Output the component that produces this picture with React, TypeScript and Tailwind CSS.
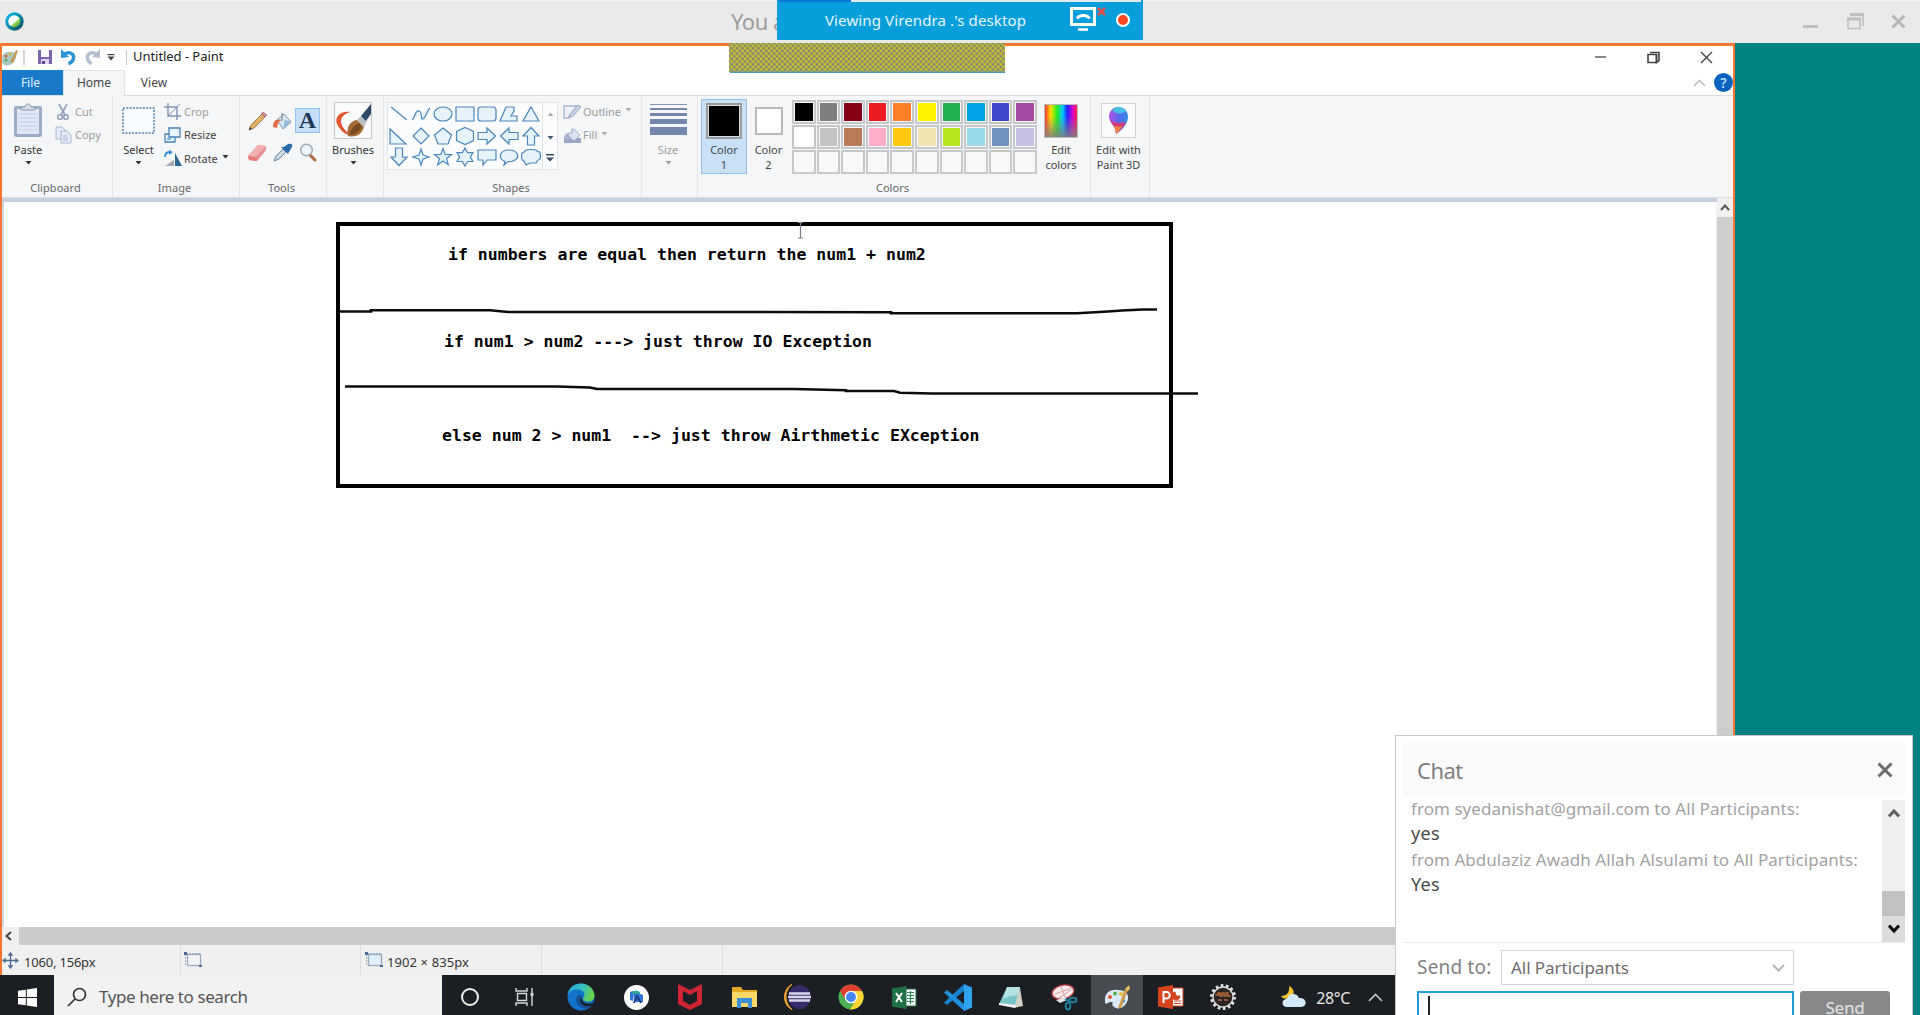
import React from "react";
import type { ReactNode } from "react";

/* ---------- small shared pieces ---------- */

function Caret({ className = "text-[#222]" }: { className?: string }) {
  return (
    <svg width="7" height="4" viewBox="0 0 7 4" className={className}>
      <path d="M0.5 0h6L3.5 3.6z" fill="currentColor" />
    </svg>
  );
}

function Group({ width, label, children }: { width: string; label?: string; children: ReactNode }) {
  return (
    <div className={`${width} flex h-[101px] shrink-0 flex-col border-r border-[#e2e3e4] bg-[#f5f6f7]`}>
      <div className="flex h-[83px] items-start">{children}</div>
      <div className="h-[18px] pr-[3px] text-center leading-[17px] tracking-[0.05px] text-[#686868]">{label}</div>
    </div>
  );
}

function BigButton({
  width,
  icon,
  lines,
  caret,
  className = "text-[#444]",
}: {
  width: string;
  icon: ReactNode;
  lines: string[];
  caret?: boolean;
  className?: string;
}) {
  return (
    <div className={`${width} ${className} flex shrink-0 flex-col items-center pt-[6px]`}>
      <div className="flex h-[37px] items-center justify-center">{icon}</div>
      <div className="mt-[3px] text-center">
        {lines.map((l) => (
          <div key={l} className="h-[15px] whitespace-nowrap leading-[15px]">
            {l}
          </div>
        ))}
      </div>
      {caret && <Caret className="mt-[4px]" />}
    </div>
  );
}

function SmallRow({ icon, label, caret, muted }: { icon: ReactNode; label: string; caret?: boolean; muted?: boolean }) {
  return (
    <div className={`flex h-[23.5px] items-center ${muted ? "text-[#9b9b9b]" : "text-[#444]"}`}>
      <div className="flex w-[20px] items-center">{icon}</div>
      <span className="leading-[16px]">{label}</span>
      {caret && <Caret className={`mb-[3px] ml-[4px] ${muted ? "text-[#a9a9a9]" : "text-[#333]"}`} />}
    </div>
  );
}

/* ---------- ribbon icons ---------- */

const PasteIcon = () => (
  <svg width="30" height="35" viewBox="0 0 30 35">
    <rect x="1" y="3" width="28" height="31" rx="2" fill="#9cadca" />
    <rect x="4" y="6" width="22" height="25" fill="#dfe7f5" />
    <path d="M5 11h20M5 15h20M5 19h20M5 23h20M5 27h20" stroke="#c3cfe6" />
    <path d="M8 7V4h4c0-4 6-4 6 0h4v3z" fill="#d8dee9" stroke="#8796b3" />
  </svg>
);
const CutIcon = () => (
  <svg width="16" height="18" viewBox="0 0 16 18" fill="none" stroke="#94a1ba" strokeWidth="1.6">
    <path d="M4 1l6 11M12 1L6 12" />
    <circle cx="5" cy="14" r="2.3" />
    <circle cx="11" cy="14" r="2.3" />
  </svg>
);
const CopyIcon = () => (
  <svg width="17" height="18" viewBox="0 0 17 18" fill="#e6ebf6" stroke="#a9b7d3">
    <path d="M1 1h6l3 3v9H1z" />
    <path d="M6 5h6l4 4v8H6z" />
    <path d="M8 10h4M8 12h5M8 14h5" />
  </svg>
);
const CropIcon = () => (
  <svg width="17" height="17" viewBox="0 0 17 17" fill="none" stroke="#8195b5" strokeWidth="1.4">
    <path d="M0 4h13v13M4 0v13h13" />
    <path d="M4 13L16 1" strokeWidth="1" />
  </svg>
);
const ResizeIcon = () => (
  <svg width="17" height="16" viewBox="0 0 17 16" fill="#eaf4fc" stroke="#4683b5" strokeWidth="1.3">
    <path d="M1 7h10v8H1z" />
    <path d="M5 1h11v9H5z" />
    <path d="M3 12h4" stroke="#2e9bdc" />
  </svg>
);
const RotateIcon = () => (
  <svg width="19" height="17" viewBox="0 0 19 17">
    <path d="M10 16H1l9-6z" fill="#a3acb5" />
    <path d="M11 16V3l7 13z" fill="#2e6792" />
    <path d="M1 7c0-4 2-5 5-5" fill="none" stroke="#2f8fe0" strokeWidth="1.8" />
    <path d="M5 0l4 2-4 3z" fill="#2f8fe0" />
  </svg>
);
const PencilIcon = () => (
  <svg width="20" height="20" viewBox="0 0 20 20">
    <path d="M1 19l2-5L14 3l3 3L6 17z" fill="#e2b264" stroke="#8a6a3c" strokeWidth=".8" />
    <path d="M13 3l2-2 4 3-2 2z" fill="#d48a84" stroke="#8d6666" strokeWidth=".6" />
    <path d="M1 19l1-3 2 2z" fill="#333" />
  </svg>
);
const BucketIcon = () => (
  <svg width="21" height="20" viewBox="0 0 21 20">
    <path d="M5 9l7-6 7 8-8 7z" fill="#dbe8f3" stroke="#7391ac" />
    <path d="M10 10V2" stroke="#6c7e90" fill="none" />
    <path d="M1 16c0-6 3-9 9-7-4 1-4 4-5 8z" fill="#dd6b43" />
    <path d="M13 9l6 2-8 7z" fill="#8fbade" />
  </svg>
);
const EraserIcon = () => (
  <svg width="21" height="18" viewBox="0 0 21 18">
    <path d="M1 12L11 1l8 1v4L10 17l-8-1z" fill="#e58d90" />
    <path d="M1 12L11 1l8 1-10 11z" fill="#f3b0b0" />
    <path d="M1 12l8 1 1 4-8-1z" fill="#e8797c" />
  </svg>
);
const PickerIcon = () => (
  <svg width="20" height="19" viewBox="0 0 20 19">
    <path d="M1 18l2-5 7-7 3 3-7 7z" fill="#c8d6e2" stroke="#6e8aa3" />
    <path d="M8 4l7 7 1-2 3-5c1-3-1-4-4-3l-4 3z" fill="#2a6cab" />
  </svg>
);
const MagnifierIcon = () => (
  <svg width="18" height="19" viewBox="0 0 18 19">
    <path d="M11 12l5 5" stroke="#b0683c" strokeWidth="3" strokeLinecap="round" />
    <circle cx="7.5" cy="7" r="5.8" fill="#eef5fb" stroke="#9ba7b3" strokeWidth="1.4" />
  </svg>
);
const BrushIcon = () => (
  <svg width="38" height="37" viewBox="0 0 38 37">
    <rect x=".5" y=".5" width="37" height="36" fill="#fbfbfc" stroke="#c4c6c9" />
    <path d="M17 10C7 8 0 15 3 22c3 6 8 11 15 12-6-5-11-9-11-15 0-4 4-8 10-9z" fill="#e2562f" />
    <path d="M14 34c-2-9 2-15 9-16l7 7c-2 7-8 11-16 9z" fill="#a56a33" />
    <path d="M16 33c0-5 4-10 9-12l3 3c-2 5-6 8-12 9z" fill="#7a4a22" />
    <path d="M23 18l4-4 6 5-3 6z" fill="#b9bec4" />
    <path d="M27 14L37 2v10l-5 7z" fill="#2c4a68" />
  </svg>
);

function Shape({ d }: { d: string }) {
  return (
    <svg width="22" height="22" viewBox="0 0 22 22" fill="#e6f3fb" stroke="#4a86b8" strokeWidth="1.2">
      <path d={d} />
    </svg>
  );
}
const SHAPES = [
  "M3 4l16 13",
  "M2 17c3-2 3-10 7-9s1 9 4 8 3-7 7-11",
  "M2 11a9 7 0 0 1 18 0a9 7 0 0 1-18 0z",
  "M2 4h18v14H2z",
  "M5 4h12q3 0 3 3v8q0 3-3 3H5q-3 0-3-3V7q0-3 3-3z",
  "M2 18h17v-5h-6l3-5V4H8z",
  "M11 4l8 14H3z",
  "M2 4v15h16z",
  "M11 3l8 8-8 8-8-8z",
  "M11 3l8.5 7-3.5 9H6L2.500 10z",
  "M11 2.500l8.500 4v9l-8.500 4-8.500-4v-9z",
  "M2 7.500h9V3l8.500 8-8.500 8v-4.500H2z",
  "M20 7.500h-9V3l-8.500 8 8.500 8v-4.500h9z",
  "M7.500 20v-9H3l8-8.500 8 8.500h-4.500v9z",
  "M7.500 2v9H3l8 8.500 8-8.500h-4.500V2z",
  "M11 3l2 6 6 2-6 2-2 6-2-6-6-2 6-2z",
  "M11 2.500l2.200 5.900 6.300.2-5 3.900 1.800 6.200-5.300-3.600-5.300 3.600 1.800-6.200-5-3.900 6.300-.2z",
  "M11 2l2.600 4.600H19L16.400 11l2.600 4.500h-5.400L11 20l-2.600-4.500H3L5.600 11 3 6.600h5.400z",
  "M2 4h18v10h-9l-4 5v-5H2z",
  "M7 15.500C-1 12 2 4 11 4s12 8 4 11c-2 .8-4 .8-5 .6L6 19z",
  "M6 4q5-1 10 0 1 2 4 2 1 4 0 7-3 1-4 4h-6l-4 2-1-2q-1-3-3-3-1-4 0-7 3-1 4-3z",
];

const OutlineIcon = () => (
  <svg width="19" height="16" viewBox="0 0 19 16">
    <path d="M1 2h13l-9 12H1z" fill="#eef1f8" stroke="#a8b4d0" strokeWidth="1.3" />
    <path d="M6 14l1-4 8-9 3 2-8 9z" fill="#c9d2e6" stroke="#98a7c6" />
  </svg>
);
const FillIcon = () => (
  <svg width="19" height="17" viewBox="0 0 19 17">
    <path d="M1 11h17v5H1z" fill="#98a6c8" />
    <path d="M1 12c0-5 3-7 8-6l-3 7z" fill="#a9b5d3" />
    <path d="M5 8l6-6 6 6-6 6z" fill="#dce2ef" stroke="#a8b4d0" />
    <path d="M9 7V1" stroke="#a8b4d0" />
  </svg>
);

const PALETTE = [
  "#000000", "#7f7f7f", "#880015", "#ed1c24", "#ff7f27", "#fff200", "#22b14c", "#00a2e8", "#3f48cc", "#a349a4",
  "#ffffff", "#c3c3c3", "#b97a57", "#ffaec9", "#ffc90e", "#efe4b0", "#b5e61d", "#99d9ea", "#7092be", "#c8bfe7",
  "", "", "", "", "", "", "", "", "", "",
];

/* ---------- paint window ---------- */

function TitleRow() {
  return (
    <div className="flex h-[24px] items-center bg-white pb-[2px]">
      <svg width="17" height="17" viewBox="0 0 17 17" className="shrink-0">
        <path d="M0 7c2-5 9-5 13-3 3 2 0 9-3 11s-7 2-9 0 0-4-1-8z" fill="#a8c8c6" />
        <circle cx="4" cy="7" r="1.500" fill="#d9603c" />
        <circle cx="8" cy="5" r="1.500" fill="#e0b83a" />
        <circle cx="4" cy="11" r="1.500" fill="#5aa457" />
        <path d="M8 13l6-12 2 1-5 12z" fill="#c89a5c" />
      </svg>
      <div className="ml-[4px] h-[15px] w-[2px] bg-[#d4d4d4]" />
      <svg width="16" height="16" viewBox="0 0 16 16" className="ml-[12px]">
        <path d="M1 1h14v14H1z" fill="#7d64ae" />
        <path d="M4 1h8v7H4z" fill="#fff" />
        <path d="M4 10h8v5H4z" fill="#dcd4ee" />
        <path d="M5 12h3v3H5z" fill="#60488f" />
      </svg>
      <svg width="17" height="17" viewBox="0 0 17 17" className="ml-[7px]" fill="none">
        <path d="M4 5.500c5-3.500 10.500-1 9.500 4-.4 3-2 4-5 5.500" stroke="#2a94d6" strokeWidth="3.400" />
        <path d="M1 0v9l8-1z" fill="#2a94d6" />
      </svg>
      <svg width="17" height="17" viewBox="0 0 17 17" className="ml-[7px]" fill="none">
        <path d="M13 5.500C8 2 2.500 4.500 3.500 9.500c.4 3 2 4 4 5.500" stroke="#b4bfd2" strokeWidth="3.400" />
        <path d="M16 0v9l-8-1z" fill="#b4bfd2" />
      </svg>
      <svg width="8" height="7" viewBox="0 0 8 7" className="ml-[6px] text-[#444]">
        <path d="M.5 0h7v1.200h-7zM.5 2.600h7L4 6.500z" fill="currentColor" />
      </svg>
      <div className="ml-[11px] h-[15px] w-[1px] bg-[#c9c9c9]" />
      <span className="ml-[6px] text-[13px] tracking-[-0.05px] text-[#222]">Untitled - Paint</span>
      <div className="ml-auto mr-[20px] flex items-center text-[#444]">
        <div className="mr-[41px] h-[2px] w-[11px] bg-[#888]" />
        <svg width="13" height="13" viewBox="0 0 13 13" className="mr-[40px]" fill="none" stroke="currentColor" strokeWidth="1.600">
          <path d="M1 3.500h8.500v8H1z" />
          <path d="M3 1.500h9v8L9.500 11.500V3.500" />
        </svg>
        <svg width="13" height="13" viewBox="0 0 13 13" stroke="currentColor" strokeWidth="1.400">
          <path d="M1 1l11 11M12 1L1 12" />
        </svg>
      </div>
    </div>
  );
}

function TabRow() {
  return (
    <div className="flex h-[25px] items-stretch bg-white text-[12px] leading-[25px] text-[#444]">
      <div className="w-[61px] bg-[#1979ca] pr-[4px] text-center text-[#e9f3fb]">File</div>
      <div className="z-10 -mb-px w-[62px] border-x border-t border-[#e2e3e4] bg-[#f5f6f7] text-center leading-[24px]">Home</div>
      <div className="w-[58px] text-center">View</div>
      <div className="ml-auto flex items-center">
        <svg width="13" height="8" viewBox="0 0 13 8" className="mr-[8px]" fill="none" stroke="#bdbdbd" strokeWidth="1.600">
          <path d="M1 7l5.500-5.500L12 7" />
        </svg>
        <div className="size-[19px] rounded-full bg-[#0a62bd] text-center text-[14px] font-semibold leading-[19px] text-[#b9dcff]">?</div>
      </div>
    </div>
  );
}

function Ribbon() {
  return (
    <div className="flex h-[103px] border-y border-[#dcddde] bg-[#f5f6f7] text-[11px]">
      <Group width="w-[111px]" label="Clipboard">
        <BigButton width="w-[52px]" icon={<PasteIcon />} lines={["Paste"]} caret className="text-[#333]" />
        <div className="ml-px pt-[4px]">
          <SmallRow icon={<CutIcon />} label="Cut" muted />
          <SmallRow icon={<CopyIcon />} label="Copy" muted />
        </div>
      </Group>
      <Group width="w-[127px]" label="Image">
        <BigButton
          width="w-[51px]"
          lines={["Select"]}
          caret
          className="text-[#333]"
          icon={
            <svg width="33" height="27" viewBox="0 0 33 27">
              <rect x="1" y="1" width="31" height="25" fill="#f8fbfd" stroke="#4f82ae" strokeWidth="1.500" strokeDasharray="2 1.300" />
            </svg>
          }
        />
        <div className="pt-[4px]">
          <SmallRow icon={<CropIcon />} label="Crop" muted />
          <SmallRow icon={<ResizeIcon />} label="Resize" />
          <SmallRow icon={<RotateIcon />} label="Rotate" caret />
        </div>
      </Group>
      <Group width="w-[87px]" label="Tools">
        <div className="ml-[5px] grid grid-cols-[25px_25px_25px] grid-rows-[29px_35px] place-items-center pt-[10px]">
          <PencilIcon />
          <BucketIcon />
          <div className="size-[25px] border border-[#8fc0ee] bg-[#c7dff6] text-center font-['Liberation_Serif'] text-[24px] font-bold leading-[23px] text-[#1e3857]">
            A
          </div>
          <EraserIcon />
          <PickerIcon />
          <MagnifierIcon />
        </div>
      </Group>
      <Group width="w-[57px]">
        <BigButton width="w-[52px]" icon={<BrushIcon />} lines={["Brushes"]} caret className="text-[#333]" />
      </Group>
      <Group width="w-[258px]" label="Shapes">
        <div className="ml-[3px] mt-[6px] flex h-[68px] w-[171px] border border-[#dfe1e3] bg-[#fbfcfd]">
          <div className="grid h-[66px] w-[154px] grid-cols-7 grid-rows-[21.5px_21.5px_21.5px]">
            {SHAPES.map((d) => (
              <Shape key={d} d={d} />
            ))}
          </div>
          <div className="flex flex-1 flex-col items-center justify-between border-l border-[#dfe1e3] py-[9px]">
            <Caret className="rotate-180 text-[#a5a8ac]" />
            <Caret className="mt-[5px] text-[#3c5672]" />
            <svg width="8" height="8" viewBox="0 0 8 8" className="-mb-[2px] text-[#3c4c62]">
              <path d="M0 0h8v1.500H0zM0 3.500h8L4 7.500z" fill="currentColor" />
            </svg>
          </div>
        </div>
        <div className="ml-[5px] pt-[4px] text-[#9b9b9b]">
          <SmallRow icon={<OutlineIcon />} label="Outline" caret muted />
          <SmallRow icon={<FillIcon />} label="Fill" caret muted />
        </div>
      </Group>
      <Group width="w-[56px]">
        <BigButton
          width="w-[52px]"
          lines={["Size"]}
          caret
          className="text-[#9b9b9b]"
          icon={
            <div className="flex w-[37px] flex-col gap-[3px] pb-[2px]">
              <div className="h-px bg-[#8496b8]" />
              <div className="h-[2px] bg-[#7387ad]" />
              <div className="h-[3px] bg-[#7387ad]" />
              <div className="h-[5px] bg-[#7387ad]" />
              <div className="h-[8px] bg-[#7387ad]" />
            </div>
          }
        />
      </Group>
      <Group width="w-[393px]" label="Colors">
        <div className="ml-[3px] mt-[3px] h-[75px] w-[46px] border border-[#8fc0ee] bg-[#c9e0f7] text-[#444]">
          <BigButton
            width="w-[44px] -mt-[4px]"
            lines={["Color", "1"]}
            icon={
              <div className="size-[36px] border-2 border-[#9a9a9a] bg-[#d5dce4] p-px">
                <div className="size-full bg-black" />
              </div>
            }
          />
        </div>
        <BigButton
          width="w-[43px]"
          lines={["Color", "2"]}
          icon={<div className="size-[28px] border-2 border-[#b9b9b9] bg-white" />}
        />
        <div className="ml-[2px] mt-[4px] grid w-[246px] grid-cols-10 gap-y-[1px]">
          {PALETTE.map((c, i) => (
            <div key={i} className="h-[24px] w-[23.500px] border-2 border-[#c6c7c9] bg-[#f7f8f9] p-px">
              {c && <div className="size-full" style={{ backgroundColor: c }} />}
            </div>
          ))}
        </div>
        <BigButton
          width="w-[46px]"
          lines={["Edit", "colors"]}
          icon={
            <div className="size-[34px] border border-[#bbb] bg-[linear-gradient(90deg,#f33,#fd0_18%,#2e2_38%,#0cf_55%,#22f_70%,#d0c_87%,#f24)]">
              <div className="size-full bg-[linear-gradient(transparent_35%,#808080e0)]" />
            </div>
          }
        />
      </Group>
      <Group width="w-[59px]">
        <BigButton
          width="w-[55px]"
          lines={["Edit with", "Paint 3D"]}
          icon={
            <div className="flex size-[35px] items-center justify-center border border-[#cfd1d3] bg-[#fafbfb]">
              <svg width="21" height="29" viewBox="0 0 21 29">
                <defs>
                  <linearGradient id="p3a" x1="0" y1="0.4" x2="1" y2="0.5">
                    <stop offset="0" stopColor="#b453e6" />
                    <stop offset=".5" stopColor="#5a68ec" />
                    <stop offset="1" stopColor="#2f8fe8" />
                  </linearGradient>
                </defs>
                <path d="M10.500 1C4 1 1 6 1 11c0 6 7 8 7 17 5-3 12-10 12-17 0-6-4-10-9.500-10z" fill="url(#p3a)" />
                <path d="M4 4c4-4 10-4 14 1-3 3-10 4-14-1z" fill="#46c3e2" />
                <path d="M2 14c6 4 12 3 16 2-2 5-6 9-10 12 0-7-4-9-6-14z" fill="#d1397b" />
                <path d="M6 20c3 1 6 1 8 0-2 4-3 5-6 8 0-3-1-6-2-8z" fill="#f08a3c" />
              </svg>
            </div>
          }
        />
      </Group>
    </div>
  );
}

function Canvas() {
  return (
    <div className="relative h-[725px] w-[1714px] overflow-hidden border-l-2 border-[#ccd5e4] bg-white font-['DejaVu_Sans_Mono'] text-[16.500px] font-bold leading-[20px] tracking-[0.02px] text-black">
      <div className="absolute left-[332px] top-[20px] h-[266px] w-[837px] border-4 border-black" />
      <svg width="1712" height="725" viewBox="4 202 1712 725" className="absolute left-0 top-0" fill="none" stroke="#0c0c0c" strokeWidth="2.600">
        <path d="M340 311.500H371V310.300H490L508 312H760L891 312.300V313.200H1077L1108 311.500L1122 310.500L1143 309.500H1157" />
        <path d="M345 386.500H557L590 387.500L597 389H794L846 390.300V391H894L900 392.700L932 393.500H1198" />
        <path d="M798 222.500h2.500v15.500M800.500 222.500h2.500M798 238h5" stroke="#7c7f88" strokeWidth="1.200" />
      </svg>
      <div className="absolute left-[444px] top-[43px] whitespace-pre">if numbers are equal then return the num1 + num2</div>
      <div className="absolute left-[440px] top-[130px] whitespace-pre">{"if num1 > num2 ---> just throw IO Exception"}</div>
      <div className="absolute left-[438px] top-[224px] whitespace-pre">{"else num 2 > num1  --> just throw Airthmetic EXception"}</div>
    </div>
  );
}

const FrameIcon = ({ fill }: { fill: string }) => (
  <svg width="19" height="17" viewBox="0 0 19 17">
    <rect x="3.500" y="2.500" width="13" height="11" fill={fill} stroke="#9aa9bc" strokeWidth="1.300" />
    <path d="M1.500 2v12M2 1.500h14" stroke="#9db0c6" strokeDasharray="2 1" />
    <path d="M0 0h3v3H0zM15 13h3v2h-3z" fill="#4a6a94" />
  </svg>
);

function StatusBar() {
  return (
    <div className="flex h-[30px] items-stretch bg-[#f0f0f0] text-[13px] leading-[30px] text-[#333]">
      <div className="flex w-[179px] items-center border-r border-[#dcdcdc]">
        <svg width="17" height="17" viewBox="0 0 17 17" stroke="#4b6a92" strokeWidth="1.300" fill="#4b6a92">
          <path d="M8.500 2v13M2 8.500h13" />
          <path d="M7 3l1.500-2L10 3zM7 14l1.500 2 1.500-2zM3 7L1 8.500 3 10zM14 7l2 1.500-2 1.500z" />
        </svg>
        <span className="ml-[5px] pt-[3px] tracking-[-0.2px]">1060, 156px</span>
      </div>
      <div className="flex w-[180px] items-center border-r border-[#dcdcdc] pl-[3px]">
        <FrameIcon fill="#f4f4f6" />
      </div>
      <div className="flex w-[181px] items-center border-r border-[#dcdcdc] pl-[4px]">
        <FrameIcon fill="#dff0fa" />
        <span className="ml-[3px] pt-[3px] tracking-[0.1px]">1902 × 835px</span>
      </div>
      <div className="w-[181px] border-r border-[#dcdcdc]" />
    </div>
  );
}

function PaintWindow() {
  return (
    <div className="flex h-[932px] w-[1735px] flex-col border-l-2 border-r-2 border-t-[3px] border-[#fb7430] bg-[#f0f0f0]">
      <TitleRow />
      <TabRow />
      <Ribbon />
      <div className="flex h-[729px] shrink-0">
        <div className="flex w-[1715px] flex-col">
          <div className="h-[4px] shrink-0 bg-[#c3cedf]" />
          <Canvas />
        </div>
        <div className="flex flex-1 flex-col bg-[#cdcdcd]">
          <div className="flex h-[19px] items-center justify-center bg-[#f0f0f0]">
            <svg width="10" height="7" viewBox="0 0 10 7" fill="none" stroke="#555" strokeWidth="2">
              <path d="M1 6l4-4.500L9 6" />
            </svg>
          </div>
        </div>
      </div>
      <div className="flex h-[18px] bg-[#cbcbcb]">
        <div className="flex w-[17px] items-center bg-[#f0f0f0] pl-[3px]">
          <svg width="7" height="10" viewBox="0 0 7 10" fill="none" stroke="#444" strokeWidth="2">
            <path d="M6 1L1.500 5 6 9" />
          </svg>
        </div>
      </div>
      <StatusBar />
    </div>
  );
}

/* ---------- taskbar ---------- */

function TaskIcon({ children, active, wide }: { children: ReactNode; active?: boolean; wide: string }) {
  return (
    <div className={`${wide} flex h-full shrink-0 items-center justify-center pt-[4px] ${active ? "bg-[#474b50]" : ""}`}>
      {children}
    </div>
  );
}

function Taskbar() {
  return (
    <div className="flex h-[40px] w-[1395px] bg-[#1b1f23]">
      <div className="flex w-[54px] items-center justify-center pt-[4px]">
        <svg width="19" height="19" viewBox="0 0 19 19" fill="#fff">
          <path d="M0 2.800L7.800 1.700V9H0zM8.800 1.500L19 0v9H8.800zM0 10h7.800v7.300L0 16.200zM8.800 10H19v9L8.800 17.500z" />
        </svg>
      </div>
      <div className="flex w-[388px] items-center bg-[#f2f2f2] pt-[4px]">
        <svg width="20" height="20" viewBox="0 0 20 20" className="ml-[13px]" fill="none" stroke="#333" strokeWidth="1.700">
          <circle cx="12.500" cy="7.500" r="6" />
          <path d="M8 12l-7 7" />
        </svg>
        <span className="ml-[12px] text-[17px] leading-[22px] tracking-[-0.42px] text-[#555]">Type here to search</span>
      </div>
      <TaskIcon wide="w-[56px]">
        <div className="size-[18px] rounded-full border-[2.500px] border-[#eee]" />
      </TaskIcon>
      <TaskIcon wide="w-[53px]">
        <svg width="20" height="18" viewBox="0 0 20 18" fill="none" stroke="#d4d6d8" strokeWidth="1.400">
          <path d="M1 0v3h11V0M1 18v-3h11v3M2.500 5.500h9v7h-9zM17 0v18" />
          <path d="M15.500 5h3v3h-3z" fill="#d4d6d8" stroke="none" />
        </svg>
      </TaskIcon>
      <TaskIcon wide="w-[59px]">
        <svg width="28" height="28" viewBox="0 0 28 28">
          <defs>
            <linearGradient id="eg" x1="0" y1="0" x2="1" y2=".3">
              <stop offset="0" stopColor="#2aa5dd" />
              <stop offset=".6" stopColor="#35c0bd" />
              <stop offset="1" stopColor="#67d24d" />
            </linearGradient>
          </defs>
          <circle cx="14" cy="14" r="13.500" fill="#1273c8" />
          <path d="M.5 13C1 5 7 .5 14 .5S27.500 6 27.500 12.500c0 4-3 6-6.500 6s-5-1.500-5-3c0-1 1.500-2 1.500-4C17.500 8 13 6 9 6.500 4 7 1 10 .5 13z" fill="url(#eg)" />
          <path d="M9 16c0 6 5 10 11 9.500 2.500-.5 4.500-2 5.500-3.500-5 2-10 0-11-3-1-3 1-4 1-5-2-3-6.500-2-6.500 2z" fill="#14509a" />
          <path d="M14.500 14.500c-.500 4 4 7.500 11.500 5.500l-1 2.500c-6 2-12-1-12-6z" fill="#1b1f23" />
        </svg>
      </TaskIcon>
      <TaskIcon wide="w-[52px]">
        <div className="flex size-[25px] items-center justify-center rounded-full bg-white">
          <svg width="15" height="16" viewBox="0 0 15 16">
            <path d="M1 3l3-1v10l-3-1zM4 4h5l5 2v7H5z" fill="#2f73d9" />
            <path d="M3 3q4-3 8 0v2L4 5z" fill="#3aa39a" />
            <path d="M4 14L8 5l5 9h-2L8 9l-2 5z" fill="#173f80" />
          </svg>
        </div>
      </TaskIcon>
      <TaskIcon wide="w-[55px]">
        <svg width="26" height="26" viewBox="0 0 26 26" fill="#cf2433">
          <path d="M1 0l12 6L25 0v20l-12 6-12-6zM6 7v10l7 4 7-4V7l-7 4z" fillRule="evenodd" />
        </svg>
      </TaskIcon>
      <TaskIcon wide="w-[54px]">
        <svg width="25" height="22" viewBox="0 0 25 22">
          <path d="M0 1h9l2 3h14v17H0z" fill="#e5a822" />
          <path d="M0 6h25v15H0z" fill="#fbd767" />
          <path d="M5 22V12h15v10h-4v-5H9v5z" fill="#3c8ed6" />
        </svg>
      </TaskIcon>
      <TaskIcon wide="w-[53px]">
        <svg width="27" height="26" viewBox="0 0 27 26">
          <path d="M8 .5C-2 5-2 21 8 25.500-1 17 1 6 8 .5z" fill="#f0a530" stroke="#f0a530" />
          <ellipse cx="15.500" cy="13" rx="11.500" ry="12" fill="#382b6c" />
          <path d="M5 9.500h21M4 13h23M5 16.500h21" stroke="#d9d6ea" strokeWidth="2.300" />
        </svg>
      </TaskIcon>
      <TaskIcon wide="w-[53px]">
        <svg width="26" height="26" viewBox="0 0 26 26">
          <circle cx="13" cy="13" r="12.500" fill="#4caf50" />
          <path d="M2 7A12.500 12.500 0 0 1 24 7H13l-6 8z" fill="#e0402f" />
          <path d="M24 7A12.500 12.500 0 0 1 12 25.500L19 14l-1-4-5-3z" fill="#fdd633" />
          <circle cx="13" cy="13" r="6.300" fill="#fff" />
          <circle cx="13" cy="13" r="4.900" fill="#4285f4" />
        </svg>
      </TaskIcon>
      <TaskIcon wide="w-[54px]">
        <svg width="25" height="23" viewBox="0 0 25 23">
          <path d="M12 3h12v17H12z" fill="#fff" stroke="#1f7145" />
          <path d="M15 6.500h7M15 9.500h7M15 12.500h7M15 15.500h7M18.500 5v13" stroke="#2c8254" strokeWidth="1.200" />
          <path d="M0 2.500L14.500 0v23L0 20.500z" fill="#1f7145" />
          <path d="M4 7l6 9M10 7l-6 9" stroke="#fff" strokeWidth="2" />
        </svg>
      </TaskIcon>
      <TaskIcon wide="w-[53px]">
        <svg width="28" height="27" viewBox="0 0 28 27">
          <path d="M20 0l8 3.500v20L20 27z" fill="#2ea3ef" />
          <path d="M20 0v7L3 21l-3-2.500z" fill="#1782cc" />
          <path d="M3 6L0 8.500 20 27v-7z" fill="#1e90dc" />
        </svg>
      </TaskIcon>
      <TaskIcon wide="w-[53px]">
        <svg width="26" height="25" viewBox="0 0 26 25">
          <path d="M10 3l12 0 3 18-9 2z" fill="#d3d2c6" />
          <path d="M9 2h13l-5 18-16-1z" fill="#79c6ca" />
          <path d="M9 2h13l-2 8-8 1-7 3z" fill="#b5e1e2" />
          <path d="M1 18l17 2-1 3L1 20z" fill="#f4f4f4" />
        </svg>
      </TaskIcon>
      <TaskIcon wide="w-[54px]">
        <svg width="27" height="27" viewBox="0 0 27 27">
          <ellipse cx="12" cy="8" rx="11" ry="6.800" fill="#f5e9ea" stroke="#c93b45" strokeWidth="1.300" transform="rotate(-12 12 8)" />
          <path d="M4 10l17-6M8 14l12-8M10 2l4 11" stroke="#d4a1a5" />
          <path d="M5 16l10-3 1 3-7 3z" fill="#e4e4e4" />
          <path d="M14 15l4 2" stroke="#1f7f9c" strokeWidth="2" />
          <ellipse cx="22" cy="16" rx="3.500" ry="2.300" fill="none" stroke="#1f7f9c" strokeWidth="2" />
          <ellipse cx="17" cy="22" rx="2.300" ry="3.500" fill="none" stroke="#1f7f9c" strokeWidth="2" />
        </svg>
      </TaskIcon>
      <TaskIcon active wide="w-[52px]">
        <svg width="26" height="26" viewBox="0 0 26 26">
          <path d="M1 18C0 9 6 5 14 6c9 0 12 6 9 12s-9 8-13 5 1-5-3-5-5 4-6 0z" fill="#d9e9f5" />
          <circle cx="6" cy="13" r="2" fill="#e05a3a" />
          <circle cx="11" cy="9.500" r="2" fill="#55b04d" />
          <circle cx="17" cy="10" r="2" fill="#e3c13f" />
          <circle cx="19" cy="17" r="2" fill="#3e7fd0" />
          <path d="M14 24l7-19 3 1-7 18z" fill="#d19b4f" />
          <path d="M21 5l4-4 1 4-2 2z" fill="#e8b864" />
        </svg>
      </TaskIcon>
      <TaskIcon wide="w-[55px]">
        <svg width="26" height="24" viewBox="0 0 26 24">
          <path d="M12 3h13v18H12z" fill="#fff" stroke="#d24726" />
          <path d="M17 7a4 4 0 1 0 5 4h-4zM16 16h7M16 18.500h7" fill="#d24726" stroke="#d24726" />
          <path d="M0 2.500L15 0v24L0 21.500z" fill="#d7431f" />
          <path d="M5.500 18V7h3a3 3 0 0 1 0 6.500h-3" fill="none" stroke="#fff" strokeWidth="2" />
        </svg>
      </TaskIcon>
      <TaskIcon wide="w-[50px]">
        <svg width="26" height="26" viewBox="0 0 26 26">
          <circle cx="13" cy="13" r="11.500" fill="none" stroke="#e2e2e2" strokeWidth="3" strokeDasharray="2.600 2.560" />
          <circle cx="13" cy="13" r="10" fill="#2b2523" stroke="#ddd" strokeWidth="1.400" />
          <path d="M5 11h3v-2h2v3h2V9h2v3h2V9h2v3h3M8 16h4M14 16h4" stroke="#b2673c" strokeWidth="1.500" fill="none" />
        </svg>
      </TaskIcon>
      <div className="ml-auto flex items-center pr-[12px] pt-[4px]">
        <svg width="26" height="22" viewBox="0 0 26 22">
          <path d="M8 0c5 2 7 9 1 12-4 2-8 0-9-2 6 0 9-4 8-10z" fill="#f4c02c" />
          <path d="M6 21c-6 0-6-8 0-8 1-6 10-7 12-1 8-1 9 9 2 9z" fill="#d3e9fa" />
        </svg>
        <span className="ml-[9px] pt-[2px] text-[16px] leading-[20px] tracking-[-0.35px] text-[#e6e6e6]">28°C</span>
        <svg width="15" height="9" viewBox="0 0 15 9" className="ml-[18px]" fill="none" stroke="#c5c7c9" strokeWidth="1.600">
          <path d="M1 8l6.500-6.500L14 8" />
        </svg>
      </div>
    </div>
  );
}

/* ---------- overlays ---------- */

function SharingBanner() {
  return (
    <div className="absolute left-[777px] top-0 flex h-[40px] w-[366px] flex-col bg-[#069fdb]">
      <div className="mx-[2px] flex h-[2px] bg-[#e6eaee]">
        <div className="w-[72px] bg-[#0b78d7]" />
      </div>
      <div className="flex h-[38px] items-center pb-[2px]">
        <span className="ml-[48px] w-[202px] whitespace-nowrap text-[15px] tracking-[0.12px] text-[#e8f6fd]">Viewing Virendra .'s desktop</span>
        <svg width="38" height="27" viewBox="0 0 38 27" className="mb-[3px] ml-[42px]" fill="none">
          <rect x="2.500" y="3.500" width="23" height="16" stroke="#fff" strokeWidth="3" />
          <path d="M8 13.500c2.500-4 10-4 12.500 0" stroke="#fff" strokeWidth="3" />
          <path d="M9 24.500h10" stroke="#fff" strokeWidth="2.500" />
          <path d="M29 3l7 7M36 3l-7 7" stroke="#dc4f4f" strokeWidth="2.800" />
        </svg>
        <div className="ml-[9px] size-[14px] rounded-full border-2 border-white bg-[#ff4822]" />
      </div>
    </div>
  );
}

function ShareTab() {
  return (
    <svg width="276" height="30" viewBox="0 0 276 30" className="absolute left-[729px] top-[43px]">
      <defs>
        <pattern id="hatch" width="5.330" height="5.330" patternUnits="userSpaceOnUse">
          <rect width="5.330" height="5.330" fill="#7f8078" />
          <path d="M0 0l5.330 5.330M5.330 0L0 5.330" stroke="#cdc52c" strokeWidth="1.100" />
        </pattern>
      </defs>
      <rect width="276" height="29" fill="url(#hatch)" />
      <rect x="1" y="28.500" width="275" height="1.500" fill="#4d9bb3" />
    </svg>
  );
}

function ChatPanel() {
  return (
    <div className="absolute left-[1395px] top-[735px] flex h-[280px] w-[518px] flex-col border border-b-0 border-[#c9c9c9] bg-white px-[7px] pt-[7px]">
      <div className="flex h-[54px] shrink-0 items-center justify-between bg-[#fafafa] pl-[14px] pr-[12px]">
        <span className="text-[22px] tracking-[-0.5px] text-[#7d7d7d]">Chat</span>
        <svg width="16" height="16" viewBox="0 0 16 16" stroke="#6a6a6a" strokeWidth="3">
          <path d="M1.500 1.500l13 13M14.500 1.500l-13 13" />
        </svg>
      </div>
      <div className="flex h-[146px] shrink-0 border-b border-[#ececec] pt-[3px]">
        <div className="flex-1 whitespace-nowrap pl-[8px] text-[17px] leading-[25.500px] tracking-[0.05px] text-[#484848]">
          <div className="-mt-[4.500px] text-[#a2a2a2]">from syedanishat@gmail.com to All Participants:</div>
          <div className="text-[18px] tracking-[0.3px]">yes</div>
          <div className="text-[#a2a2a2]">from Abdulaziz Awadh Allah Alsulami to All Participants:</div>
          <div className="text-[18px] tracking-[0.3px]">Yes</div>
        </div>
        <div className="flex w-[23px] flex-col items-center bg-[#f0f0f0] pt-[8px]">
          <svg width="12" height="10" viewBox="0 0 12 10" fill="none" stroke="#606060" strokeWidth="3">
            <path d="M1 8.500l5-5.500 5 5.500" />
          </svg>
          <div className="mt-auto h-[25px] w-full bg-[#c1c1c1]" />
          <div className="flex h-[26px] w-full items-center justify-center bg-[#dcdcdc]">
            <svg width="12" height="10" viewBox="0 0 12 10" fill="none" stroke="#0a0a0a" strokeWidth="3">
              <path d="M1 1.500l5 5.500 5-5.500" />
            </svg>
          </div>
        </div>
      </div>
      <div className="mt-[7px] flex h-[35px] shrink-0 items-center pl-[14px]">
        <span className="w-[84px] shrink-0 text-[19px] tracking-[0.2px] text-[#808080]">Send to:</span>
        <div className="flex h-[35px] w-[293px] items-center justify-between border border-[#d6d6d6] pl-[9px] pr-[8px]">
          <span className="text-[17px] tracking-[-0.05px] text-[#6c6c6c]">All Participants</span>
          <svg width="13" height="8" viewBox="0 0 13 8" fill="none" stroke="#b5b5b5" strokeWidth="2">
            <path d="M1 1l5.500 5.500L12 1" />
          </svg>
        </div>
      </div>
      <div className="mt-[6px] flex h-[24px] overflow-hidden pl-[14px]">
        <div className="h-[60px] w-[377px] border-2 border-[#1c9fd8] pl-[9px] pt-[3px]">
          <div className="h-[40px] w-[2px] bg-[#222]" />
        </div>
        <div className="ml-[6px] h-[60px] w-[90px] rounded-[3px] bg-[#868789] pt-[6px] text-center text-[17px] font-medium leading-[22px] tracking-[-0.3px] text-[#dedede]">
          Send
        </div>
      </div>
    </div>
  );
}

export default function App() {
  return (
    <div className="relative h-[1015px] w-[1920px] overflow-hidden bg-[#008282] font-['Noto_Sans','Open_Sans',sans-serif]">
      <header className="flex h-[43px] items-center border-t border-[#f2f2f2] bg-[#eaeaea] pb-[2px]">
        <svg width="19" height="19" viewBox="0 0 19 19" className="ml-[5px]">
          <defs>
            <linearGradient id="wx" x1="0" y1="0" x2="1" y2="1">
              <stop offset="0" stopColor="#08c4f0" />
              <stop offset=".5" stopColor="#0a86a5" />
              <stop offset="1" stopColor="#073f57" />
            </linearGradient>
            <linearGradient id="wg" x1=".3" y1=".2" x2=".9" y2=".9">
              <stop offset=".4" stopColor="#fff" />
              <stop offset=".6" stopColor="#8fcf50" />
              <stop offset="1" stopColor="#48a33b" />
            </linearGradient>
          </defs>
          <circle cx="9.500" cy="9.500" r="9.200" fill="url(#wx)" />
          <circle cx="9.300" cy="9.200" r="6" fill="url(#wg)" />
        </svg>
        <span className="ml-[707px] text-[22px] tracking-[-0.500px] text-[#9c9c9c]">You a</span>
        <div className="ml-auto flex items-center pr-[14px]">
          <div className="mr-[29px] mt-[11px] h-[3px] w-[15px] bg-[#bebebe]" />
          <svg width="17" height="17" viewBox="0 0 17 17" className="mr-[27px]" fill="none" stroke="#bebebe">
            <path d="M1 5.500h12v10H1z" strokeWidth="1.600" />
            <path d="M0 6h14" strokeWidth="3" />
            <path d="M3 1.500h13" strokeWidth="3" />
            <path d="M16 0v13" strokeWidth="1.600" />
          </svg>
          <svg width="15" height="15" viewBox="0 0 15 15" stroke="#b8b8b8" strokeWidth="3">
            <path d="M1.500 1.500l12 12M13.500 1.500l-12 12" />
          </svg>
        </div>
      </header>
      <PaintWindow />
      <Taskbar />
      <ShareTab />
      <SharingBanner />
      <ChatPanel />
    </div>
  );
}
